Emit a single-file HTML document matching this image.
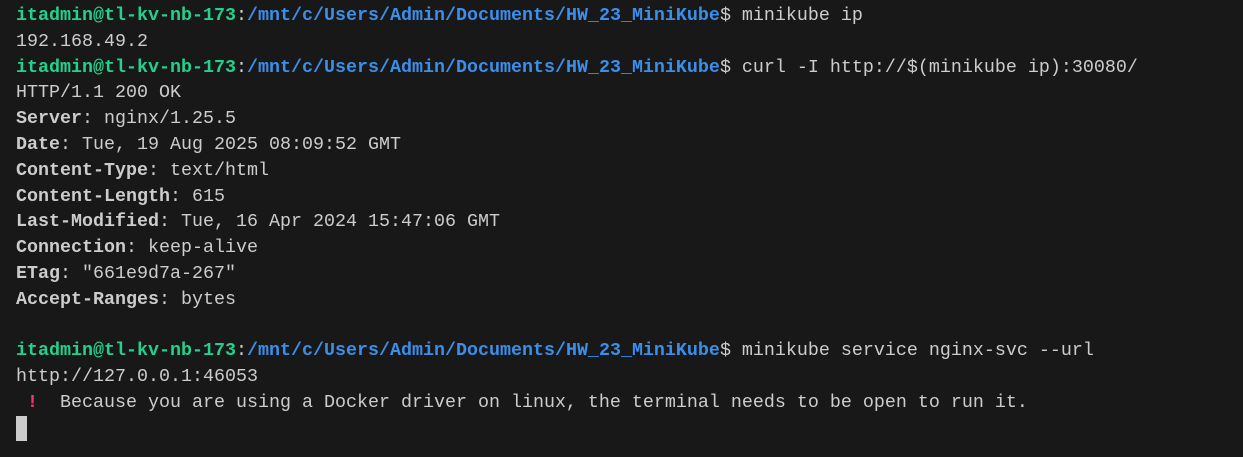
<!DOCTYPE html>
<html><head><meta charset="utf-8"><style>
html,body{margin:0;padding:0;background:#181818;width:1243px;height:457px;overflow:hidden}
pre{margin:0;padding:3px 0 0 16px;font-family:"Liberation Mono","DejaVu Sans Mono",monospace;font-size:18.33px;line-height:25.8px;color:#cccccc;white-space:pre}
.g{color:#23d18b;font-weight:bold}.b{color:#3b8eea;font-weight:bold}.w{font-weight:bold}
.e{color:#f0386b;font-weight:bold}
.c{display:inline-block;width:11px;height:25px;background:#cccccc;vertical-align:top}
</style></head><body><pre><span class="g">itadmin@tl-kv-nb-173</span>:<span class="b">/mnt/c/Users/Admin/Documents/HW_23_MiniKube</span>$ minikube ip
192.168.49.2
<span class="g">itadmin@tl-kv-nb-173</span>:<span class="b">/mnt/c/Users/Admin/Documents/HW_23_MiniKube</span>$ curl -I http://$(minikube ip):30080/
HTTP/1.1 200 OK
<span class="w">Server</span>: nginx/1.25.5
<span class="w">Date</span>: Tue, 19 Aug 2025 08:09:52 GMT
<span class="w">Content-Type</span>: text/html
<span class="w">Content-Length</span>: 615
<span class="w">Last-Modified</span>: Tue, 16 Apr 2024 15:47:06 GMT
<span class="w">Connection</span>: keep-alive
<span class="w">ETag</span>: "661e9d7a-267"
<span class="w">Accept-Ranges</span>: bytes

<span class="g">itadmin@tl-kv-nb-173</span>:<span class="b">/mnt/c/Users/Admin/Documents/HW_23_MiniKube</span>$ minikube service nginx-svc --url
http://127.0.0.1:46053
 <span class="e">!</span>  Because you are using a Docker driver on linux, the terminal needs to be open to run it.
<span class="c"></span></pre></body></html>
